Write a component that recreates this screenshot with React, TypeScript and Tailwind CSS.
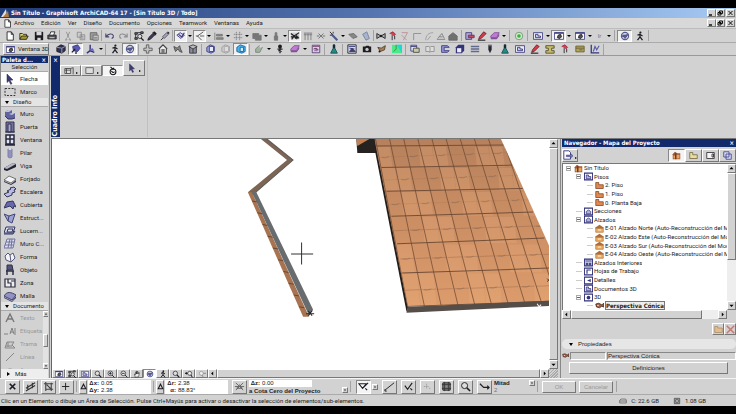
import React from "react";
import type { ReactNode } from "react";

const K = "#1c1c22";
const G = "#8c8c8c";
const N = "#34347c";
const L = "#9092c4";

const shapes: Record<string, ReactNode> = {
  page: <path d="M2.5 1h5l2.500 3v7h-7.500zM7.500 1v3H10" fill="#fff" stroke={K} />,
  open: <><path d="M1 10V3h3l1 1h4v2" fill="#e9dc7c" stroke={K} /><path d="M1 10l2-4h8l-2 4z" fill="#a89c2c" stroke={K} /></>,
  save: <><path d="M1 1h10v10H1z" fill={K} /><path d="M3 1h6v4H3zM4 8h4v3H4z" fill="#d8d8d8" /></>,
  print: <><path d="M3 5l1.500-4h5L8 5" fill="#fff" stroke={K} /><path d="M1 5h10v4.500H1z" fill="#555" stroke={K} /><path d="M3 8h6" stroke="#ddd" /></>,
  cut: <path d="M4 1l3 7M8 1L5 8M3 11a1 1 0 1 0 1-2zM9 11a1 1 0 1 1-1-2z" fill="none" stroke={G} />,
  copy: <path d="M1.500 1.500h5v6h-5zM5 4.500h5.500v6H5zM6 6.500h3M6 8.500h3" fill="#ccc" stroke={G} />,
  paste: <><path d="M1.500 2h8v8.500h-8z" fill="#9a9a9a" stroke="#666" /><path d="M5 5h6v6H5zM6 7.500h4M6 9.500h4" fill="#ddd" stroke="#666" /></>,
  undo: <path d="M1 3v4h4M1.500 6.500C4 3 9 2.500 10 5.500c.5 2-1 3-2 3.500" fill="none" stroke="#44446c" strokeWidth="1.300" />,
  redo: <path d="M11 3v4H7M10.500 6.500C8 3 3 2.500 2 5.500c-.5 2 1 3 2 3.500" fill="none" stroke={G} strokeWidth="1.300" />,
  find: <><path d="M1 2h3v2H1zM1 8h3v2H1zM8 1h3v2H8zM4 2h4M2 4v4" fill="#777" stroke={K} /><circle cx="7" cy="6.500" r="2.500" fill="#ddd" stroke={K} /><path d="M8.500 8.500l3 3" stroke={K} strokeWidth="1.500" /></>,
  dropper: <><path d="M1 11l1-3 5-5 2 2-5 5z" fill="#3c3c5c" stroke={K} /><path d="M7 2l2-1 2 2-1 2z" fill={K} stroke={K} /></>,
  syringe: <><path d="M1 11l3-3" stroke={K} /><path d="M3 7l5-5 2 2-5 5z" fill="#a8a8bc" stroke="#44445c" /><path d="M9 1l2 2" stroke={K} strokeWidth="1.500" /></>,
  check: <><path d="M1 5l4-3 5 3-4 4z" fill="#d9d9ee" stroke={N} /><path d="M3 4l4 3 3-5" fill="none" stroke={N} strokeWidth="1.300" /></>,
  angle: <path d="M10 1L3 6l5 5M1 6h3M6 6h5" fill="none" stroke="#444" />,
  align: <path d="M1 2v9M3 4h7v2H3zM3 8h8v2H3z" fill="#888" stroke="#777" />,
  grid: <path d="M4 1v10M8 1v10M1 4h10M1 8h10" stroke="#777" strokeDasharray="1.500 .7" />,
  solid: <path d="M1 3h7v6H1zM4 5h7v6H4z" fill="#777" stroke="#777" />,
  weight: <path d="M4 6h4v5H4zM5 2h2v4H5z" fill="#777" stroke="#777" />,
  gravity: <><path d="M1 2h10v8H1z" fill="#ccc" /><path d="M1 3l4 3 6-4M2 10l3-4 2 3 4-1M8 5v5M1 7h9" fill="none" stroke={K} strokeWidth="1.300" /></>,
  table: <path d="M1 2.500h10M2.500 3v8M6 3v8M9.500 3v8M1 4.500h10" stroke="#777" />,
  xmark: <path d="M3 3l6 6M9 3L3 9M1 6h3M8 6h3" stroke="#777" strokeWidth="1.200" />,
  fixed: <path d="M3 3l6 6M9 3L3 9" stroke={K} strokeWidth="1.800" />,
  wand: <><path d="M3 4l7 7" stroke="#4a5a8c" strokeWidth="2.500" /><path d="M1 1l3 3M5 1v2M1 5h2" stroke={K} /></>,
  roof: <path d="M1 4l6-1 4 4-5 2z" fill="#888" stroke="#666" />,
  leaf: <path d="M2 4l5-3 3 8-4 2z" fill="#a8b4cc" stroke="#7080a0" />,
  bowtie: <><path d="M1 3v6l5-3zM11 3v6L6 6z" fill="#aaa" stroke={K} /><circle cx="6" cy="6" r="1.500" fill={K} /></>,
  red: <><path d="M2 3l4-2 3 3-2 2" fill="#cc4450" stroke="#a02040" /><path d="M5 5v6M8 6v4" stroke={K} /></>,
  trim: <path d="M2 2h7M4 11l5-9M2 5l6 6" fill="none" stroke="#b88a90" />,
  corner: <path d="M2 11V3h9" fill="none" stroke="#888" />,
  arc: <path d="M2 11C2 5 6 2 11 2M4 11l4-5" fill="none" stroke="#999" />,
  node: <path d="M1 10h10M2 9l5-6 3 6M4 7h4" fill="none" stroke="#777" />,
  house: <path d="M1 6l5-4 5 4v5H1z" fill="#707070" stroke="#666" />,
  markup: <><path d="M1 2h7v8H1z" fill="#b8a8d4" stroke={N} /><path d="M4 5h7v3H4z" fill="#c64a5c" stroke="#603060" /></>,
  pencil: <><path d="M2 10l1-3 5-6 3 2-6 6z" fill="#d43c44" stroke="#702030" /><path d="M1 11h9" stroke={K} strokeWidth="1.300" /></>,
  eraser: <><path d="M1 6l4-4h6L8 8H1z" fill="#bf7bd0" stroke="#844c98" /><path d="M1 8h7l3-5v3L8 10H1z" fill="#80509c" /></>,
  green: <><circle cx="6" cy="6" r="4.500" fill="#d4e8cc" stroke="#64986c" /><circle cx="6" cy="6" r="2.200" fill="#38b040" /></>,
  plan: <><path d="M.5 2h11v8H.5z" fill="#eee" stroke={N} /><path d="M3 8V4h3v2h3v2z" fill="#c8c8e8" stroke={N} /></>,
  win: <><path d="M.5 2h11v8H.5z" fill="#fff" stroke={N} /><path d="M.5 2.500h11" stroke={N} strokeWidth="1.500" /><path d="M4 8l1-3 3-1 1 3-2 2z" fill="#555" stroke={K} /></>,
  orbit: <><circle cx="6" cy="6" r="4.300" fill="#ddd" stroke="#555a90" strokeWidth="1.400" /><path d="M3 5l6 0-3 4zM2 7l8-3" fill="#5c609c" stroke="#484c88" /></>,
  walk: <><circle cx="6.500" cy="1.800" r="1.300" fill={K} /><path d="M6 3v4l-3 4M6 7l3 4M3 5l3-1 3 2" fill="none" stroke={K} strokeWidth="1.500" /></>,
  cube: <><path d="M1 4l5-3 5 2v5l-4 3-6-2z" fill="#303050" stroke={K} /><path d="M1 4l6 1v6M7 5l4-2" fill="none" stroke="#a8a8d0" /></>,
  view: <><path d="M2 3l6-2 3 4-3 4-5-1z" fill="#5858b8" stroke={N} /><path d="M1 10l4-4M6 9v3" stroke={K} strokeWidth="1.500" /></>,
  axo: <><path d="M5 1v7l5 2M5 8l-4 3" fill="none" stroke={N} strokeWidth="1.700" /><path d="M5 6l3-1 2 3H5z" fill="#6464c0" /></>,
  plus: <path d="M4 1h3v4h4v3H7v3H4V8H1V5h3z" fill="#c4c4c4" stroke="#555" />,
  home: <><path d="M1 6l5-5 5 5M2 6v5h8V6" fill="#eee" stroke="#444" strokeWidth="1.300" /><path d="M4 6h4v5H4z" fill="#777" /></>,
  fly: <path d="M1 3l4 2 3-3 1 4 2 4-3-1-2-3-3 3z" fill="#888" stroke="#444" />,
  box: <><path d="M2 3h8v8H2z" fill="#8c8ca0" stroke="#333" /><path d="M1 3l5-2 5 2-5 3zM6 6v5" fill="#bbb" stroke="#333" /></>,
  blue: <><path d="M1 4l4-3 5 2v6l-4 2-5-2z" fill="#9ea6d8" stroke={N} /><path d="M4 3h5v6H4z" fill="#e6eefc" stroke={N} /></>,
  pale: <><path d="M1 4l4-3 5 2v6l-4 2-5-2z" fill="#ccc" stroke="#999" /><path d="M4 3h5v6H4z" fill="#ddd" stroke="#aaa" /></>,
  cyan: <><path d="M1 4l4-3 6 2v6l-4 2-6-2z" fill="#40b8e8" stroke="#2458a0" /><path d="M5 4h4v5H5z" fill="#c8f0ff" stroke="#2458a0" /></>,
  sun: <><path d="M2 10V6l4-4 4 2-3 6z" fill="#a0b4a0" stroke="#748474" /><circle cx="8" cy="3" r="1.500" fill="#dcdcdc" /></>,
  drill: <><circle cx="6" cy="3" r="2.300" fill={K} /><path d="M3 6h6M6 4v7M4 8l4 1" stroke={K} strokeWidth="1.500" /></>,
  list: <><path d="M1.500 1.500h9v9h-9z" fill="#dcd0ec" stroke="#503870" /><path d="M2 3h8M3 6l3-1 3 2M4 8h4" stroke="#804878" /></>,
  flask: <><path d="M5 1h2v4l3 6H2l3-6z" fill="#208c84" stroke="#164c50" /><path d="M5 1h2v4H5z" fill={K} /></>,
  render: <><path d="M1 1h10v10H1z" fill="#d4d8f0" stroke={K} /><path d="M2 3h8M3 9l3-4 4 4zM3 5l6 1" fill="#444" stroke={N} /></>,
  camera: <><path d="M1 3h3l1-1h3l1 1h2v7H1z" fill={K} /><circle cx="6" cy="6.500" r="2" fill="#c8c8c8" /></>,
  bird: <><path d="M1 4l4 1 5-3-1 5-5 2z" fill="#a88058" stroke="#4c3828" /><circle cx="3" cy="9" r="1.200" fill={K} /></>,
  vivid: <><path d="M0 1h12v10H0z" fill="#4be88c" /><path d="M6 1h6v10z" fill="#18d8d8" /><path d="M2 9l3-3v-5" stroke="#388838" fill="none" /></>,
  sheet: <><path d="M1 1.500h7v7H1z" fill="#eee" stroke={N} /><path d="M4 5h7v5H4z" fill="#c8cca0" stroke="#444" /><path d="M1 3h7" stroke={N} /></>,
  book: <path d="M1 3h4l1 1 1-1h4v6H7l-1 1-1-1H1zM6 4v6" fill="#ddd" stroke={G} />,
  sect: <path d="M2 2h7l2 2H5v4h6l-2 2H2z" fill="#9898d8" stroke={N} />,
  cubo: <><path d="M1 4l3-3h7v7l-3 3H1z" fill={N} /><path d="M2.500 5h5v5h-5z" fill="#ededf8" /></>,
  bars: <path d="M1 2h10v2H1zM1 5h10v2H1zM1 8h10v2H1z" fill="#63698c" />,
  pen: <><path d="M4 1h4v6l-2 4-2-4z" fill="#282834" /><path d="M4 2h4" stroke="#888" /></>,
  gold: <path d="M1 2h10v3H8v3h3v3H1V8h3V5H1z" fill="#c8bc68" stroke="#4c4824" />,
  tan: <path d="M1 2.500h10v7H1zM1 5h10M5 7h4" fill="#b4a45c" stroke="#645c34" />,
  plot: <><path d="M1.500 1v9.500H11" fill="none" stroke={N} strokeWidth="1.500" /><path d="M4 9l2-6 2 4 3-5" fill="none" stroke="#555aa8" strokeWidth="1.300" /></>,
  arrow: <path d="M3 1l6 6-3 .2 2 3.500-1.400.6L5 7.800 3 9.500z" fill="#3c3c74" stroke="#26264c" strokeWidth=".5" />,
  marquee: <path d="M1 2.500h10v7H1z" fill="none" stroke="#333" strokeDasharray="2 1.300" />,
  wall: <><path d="M1 4l3-2h4v3h3v5l-3 1H4L1 8z" fill="#6163a0" /><path d="M1 4l3-2h4L5 4zM5 6l3-1h3L8 7z" fill="#c0c2de" /><path d="M1 8l3 3h4l3-1" fill="none" stroke="#34345c" /></>,
  door: <><path d="M2 1h8v10H2z" fill="#70729c" stroke="#333350" /><path d="M4 3h3v8H4zM1 11h10" fill="#a8abd0" stroke="#333350" /></>,
  window: <path d="M2 1h8v9H2zM6 1v9M2 5h8M1 11h10" fill="#e0e4f4" stroke="#28283c" strokeWidth="1.500" />,
  column: <><path d="M4 2h4v8l-2 1-2-1z" fill={L} stroke="#8080a0" /><path d="M4 2l2-1 2 1-2 1z" fill="#eee" /></>,
  beam: <><path d="M0 8l9-5 3 1v3l-9 4-3-1z" fill="#222230" /><path d="M0 8l9-5 3 1-9 5z" fill="#b8b8c4" /></>,
  slab: <><path d="M0 7l5-4 7 3-5 4z" fill="#f3f3f6" stroke="#444" strokeWidth=".7" /><path d="M0 8l7 3 5-4v2l-5 3-7-3z" fill="#35354c" /></>,
  stair: <path d="M0 8l5-2-2-1 4-2-1-1 4-1 2 2-2 1 1 2-3 1 0 2-5 2z" fill="#b8baec" stroke="#35354c" />,
  roofp: <path d="M0 9l3-6 6-1 3 6-2-1-1 3-3-3z" fill="#6668ac" stroke="#33355c" />,
  shell: <path d="M0 2l5 2 6-2-3 9-4-2zM5 4l-1 5" fill="#9da1d4" stroke="#404478" />,
  sky: <path d="M2 2h9L9 8H0zM4 4h5L8 7H3zM0 9h9l2-3" fill="#dcdcf0" stroke="#303460" />,
  curtain: <path d="M3 1h8L9 10H0zM2 4h8M1 7h8M6 1L4 10M8 1L7 10" fill="#dcdcf0" stroke="#70749c" />,
  morph: <path d="M1 5l3-3 2 2 3-2 2 5-4 4-5-2zM6 4l1 7" fill="#f4f4f8" stroke="#555878" />,
  chair: <><path d="M3 1h5l1 5H3z" fill="#54547c" stroke="#303048" /><path d="M3 6v5M9 7v4M2 7h8" stroke="#303048" strokeWidth="1.500" /></>,
  zone: <path d="M1 2h10v8H1zM4 2v4h3v4M7 4h4" fill="#eee" stroke="#2c2c40" strokeWidth="1.200" />,
  mesh: <><path d="M0 6c3-5 7-4 12-1L8 10z" fill={L} stroke="#404068" /><path d="M0 7l8 4 4-5v2l-4 4-8-4z" fill="#40406c" /></>,
  text: <path d="M2 10L6 2l4 8M4 7h4" fill="none" stroke="#777" strokeWidth="1.400" />,
  label: <path d="M0 9h4M6 9l2-6 2 6M6 7h3M11 3v7" fill="none" stroke="#808080" />,
  fill: <path d="M1 10l2-6h7l-2 3 3 3zM2 8h6M4 4v5" fill="#ccc" stroke="#888" />,
  line: <path d="M2 10l8-8" stroke="#888" />,
  arco: <path d="M1 10a5 5 0 0 1 10 0" fill="none" stroke="#888" />,
  nhouse: <><path d="M0 5l4-4 3 2h4v8H1V5z" fill="#9c5838" /><path d="M2 6h2v4H2zM6 5h4v5H6z" fill="#eca45c" /><path d="M5 3v8" stroke="#402820" /></>,
  folder: <path d="M1 10V2h4v3h6v5z" fill="#eddb98" stroke="#68603c" />,
  layout: <path d="M1 2h10v8H1zM8 4h2v4H8z" fill="#f6f6f6" stroke={K} />,
  stack: <path d="M1 1h7v7H1zM4 4h7v7H4z" fill="#d4daf8" stroke={N} />,
  floor: <path d="M1 10V2h4v3h6v5z" fill="#e08850" stroke="#7c4020" />,
  elev: <><path d="M0 5l6-4 6 4v1H0z" fill="#b06c38" /><path d="M1 6h10v5H1z" fill="#eeb060" stroke="#b47840" /><path d="M4 8h4" stroke="#fff" /></>,
  folderN: <><path d="M.5 1.500h11v9H.5z" fill="#fff" stroke={N} strokeWidth="1.500" /><path d="M3 9V6l3-2 3 2v3z" fill="#b4b4d8" stroke={N} /></>,
  storeys: <><path d="M.5 1.500h11v9H.5z" fill="#fff" stroke={N} strokeWidth="1.500" /><path d="M3 9V4h3v2h3v3z" fill="#b4b4d8" stroke={N} /></>,
  interior: <><path d="M.5 1.500h11v9H.5z" fill="#c8c8e0" stroke={N} strokeWidth="1.500" /><path d="M2 4h8M3 7h2v2H3zM7 7h2v2H7z" stroke={N} fill={N} /></>,
  sheetN: <><path d="M.5 1.500h11v9H.5z" fill="#fff" stroke={N} strokeWidth="1.500" /><path d="M4 9V4h5" fill="none" stroke={N} strokeWidth="1.500" /></>,
  detail: <><path d="M.5 1.500h11v9H.5z" fill="#fff" stroke={N} strokeWidth="1.500" /><path d="M9 4L4 6l5 2z" fill={N} /></>,
  ball: <><path d="M.5 1.500h11v9H.5z" fill="#fff" stroke={N} strokeWidth="1.500" /><circle cx="6" cy="6" r="2.500" fill={N} /></>,
  cam: <><path d="M1 4l4-1 4 2 3-2v5l-3-1-3 2-4-1z" fill="#a06048" stroke="#3c2018" /><circle cx="4" cy="6" r="1" fill="#eee" /></>,
  exporter: <><path d="M1 1h6l2 2v8H1z" fill="#fff" stroke={N} /><path d="M4 6h5V4l3 3-3 3V8H4z" fill="#7078b8" stroke={N} strokeWidth=".6" /></>,
  zoom: <><circle cx="5" cy="5" r="3.300" fill="#ddd" stroke={K} /><path d="M7.500 7.500L11 11" stroke={K} strokeWidth="1.600" /></>,
  zoomin: <><circle cx="5" cy="5" r="3.500" fill="#eee" stroke={K} /><path d="M7.500 7.500L11 11M3 5h4M5 3v4" stroke={K} strokeWidth="1.300" /></>,
  zoomout: <><circle cx="5" cy="5" r="3.500" fill="#eee" stroke={K} /><path d="M7.500 7.500L11 11M3 5h4" stroke={K} strokeWidth="1.300" /></>,
  zoomprev: <><circle cx="7" cy="5" r="3" fill="#eee" stroke={K} /><path d="M9 7.500L11 11M0 5h4" stroke={K} strokeWidth="1.500" /><path d="M0 5l3-2v4z" fill={K} /></>,
  zoomnext: <><circle cx="5" cy="5" r="3" fill="#eee" stroke={G} /><path d="M6 7.500L8 11M8 5h4" stroke={G} strokeWidth="1.500" /></>,
  hand: <path d="M2 6l2 1V3h1v3-4h1v4-3.500h1.500V6l1-2h1l-1 6-5 1z" fill="#eee" stroke={K} strokeWidth=".8" />,
  wire: <path d="M1 8l10-6M1 11l10-6M3 4v6M8 2v6" stroke="#333" strokeWidth="1.200" />,
  snap: <path d="M1 3h10M3 1v10M3 9h8M9 2v9M4 4l5 5" fill="none" stroke="#444" strokeWidth="1.200" />,
  cross: <path d="M5 2v8M1 6h8" stroke={K} />,
  delta: <path d="M2 10L6 2l4 8z" fill="none" stroke={K} strokeWidth="1.800" />,
  guide: <path d="M2 2l8 8M10 2l-8 8M1 6h10M6 4l3 4H3z" fill="none" stroke="#666" />,
  poly: <path d="M1 3h8L5 8zM5 8l6-6M8 8l2 2" fill="none" stroke={K} strokeWidth="1.200" />,
  curve: <path d="M1 3l4 4 6 0M9 5l2 2-2 2" fill="none" stroke={K} strokeWidth="1.200" />,
  diag: <path d="M1 10l10-8M1 9v2h2" fill="none" stroke={K} />,
  tick: <path d="M2 5l3 4 5-7M8 8l2 2" fill="none" stroke={K} strokeWidth="1.200" />,
  dots: <path d="M2 6h5M5 3v6M8 8h2" fill="none" stroke={G} strokeDasharray="1 1" />,
  group: <><path d="M2 2h8v8H2z" fill="#888" stroke={K} /><path d="M1 4h10M1 8h10M4 1v10M8 1v10" stroke="#333" /></>,
  disk: <path d="M1 5l2-2h7l1 2v4H1zM1 6h10" fill="#ccc" stroke="#555" />,
  chip: <path d="M2 2h8v8H2zM4 4h4v4H4z" fill="#ccc" stroke="#444" strokeWidth="1.200" />,
  door2: <><path d="M1 3h7v6H1z" fill="#ddd" stroke="#444" /><path d="M8 3l3-1v8M1 5h7M3 3v6" stroke="#444" fill="none" /></>,
  rect: <path d="M1 2h9v7H1z" fill="#ddd" stroke="#555" />,
  spin: <><circle cx="6" cy="7" r="3.500" fill="#fff" stroke={K} strokeWidth="1.300" /><path d="M4 6l2 2 2-1M3 1l3 3 1-2" fill="none" stroke={K} strokeWidth="1.300" /></>,
};

function Icon({ name, className = "size-[10px]" }: { name: string; className?: string }) {
  return (
    <svg viewBox="0 0 12 12" className={`${className} shrink-0`} aria-hidden="true">
      {shapes[name]}
    </svg>
  );
}

const raised = "border border-t-white border-l-white border-r-[#777] border-b-[#777] bg-[#d2d2d2]";
const sunken = "border border-t-[#888] border-l-[#888] border-r-white border-b-white";
const bold = "font-['DejaVu_Sans_Condensed','DejaVu_Sans',sans-serif] font-bold";

function Sep({ wide }: { wide?: boolean }) {
  return (
    <span className={`flex shrink-0 justify-center ${wide ? "w-[5px]" : "w-[3px]"}`}>
      <span className="h-[11px] w-px bg-[#a2a2a2]" />
    </span>
  );
}

function Drop() {
  return (
    <button aria-label="Más opciones" className="flex h-[12px] w-[6px] shrink-0 items-center justify-center">
      <span className="border-x-2 border-t-2 border-x-transparent border-t-black" />
    </button>
  );
}

const cell = { s: "w-[12px]", m: "w-[13px]", l: "w-[15px]", x: "w-[16px]" };

/* "|" separator, "!" wide separator, "v" drop arrow, "*" pressed, "size:name" button */
function Tools({ items }: { items: string }) {
  return (
    <>
      {items.split(" ").map((item, i) => {
        if (item === "|") return <Sep key={i} />;
        if (item === "!") return <Sep key={i} wide />;
        if (item === "v") return <Drop key={i} />;
        const [size, raw] = item.split(":");
        const on = raw.startsWith("*");
        const name = on ? raw.slice(1) : raw;
        return (
          <button
            key={i}
            aria-label={name}
            aria-pressed={on}
            className={`flex h-[12px] shrink-0 items-center justify-center ${cell[size as keyof typeof cell]} ${on ? `bg-[#f0f0f0] ${sunken}` : ""}`}
          >
            <Icon name={name} />
          </button>
        );
      })}
    </>
  );
}

function WindowButtons() {
  return (
    <div className="flex">
      {["Minimizar", "Restaurar", "Cerrar"].map((label, i) => (
        <button key={label} aria-label={label} className={`flex h-[8px] w-[9px] items-center justify-center ${i === 2 ? "ml-px" : ""} ${raised}`}>
          <svg viewBox="0 0 7 6" className="h-[6px] w-[7px]" fill="none" stroke="#111">
            {i === 0 && <path d="M1 5h3" strokeWidth="1.500" />}
            {i === 1 && <path d="M2.500 1h3v2.500h-3zM1 2.500h3v2.500H1z" />}
            {i === 2 && <path d="M1.500 1l4 4M5.500 1l-4 4" />}
          </svg>
        </button>
      ))}
    </div>
  );
}

const menus = ["Archivo", "Edición", "Ver", "Diseño", "Documento", "Opciones", "Teamwork", "Ventanas", "Ayuda"];

function Header() {
  return (
    <header>
      <div className="flex h-[10px] items-center justify-between bg-linear-to-r from-[#203c78] via-[#5474b0] to-[#a8ccf4] px-px">
        <h1 className={`flex items-center gap-[2px] text-white ${bold}`}>
          <svg viewBox="0 0 8 8" className="size-[8px]"><path d="M0 8L5 0l1 8z" fill="#e4e0d8" /><path d="M2 8L7 2l1 6z" fill="#b07a40" /></svg>
          Sin Título - Graphisoft ArchiCAD-64 17 - [Sin Título 3D / Todo]
        </h1>
        <WindowButtons />
      </div>
      <div className="flex h-[11px] items-center justify-between border-b border-[#bdbdbd] bg-[#d8d8d8] px-px">
        <nav className="flex items-center gap-[7px] pl-[2px]">
          <Icon name="page" className="-mr-[5px] size-[9px]" />
          {menus.map((m) => <button key={m}>{m}</button>)}
        </nav>
        <WindowButtons />
      </div>
      <div className="flex h-[14px] items-center border-b border-[#aaa] pl-[3px]" role="toolbar" aria-label="Estándar">
        <Tools items="m:page x:open m:save m:print | m:cut m:copy m:paste | m:undo m:redo | m:find m:dropper m:syringe | m:*check v m:*angle v m:align v m:grid v m:solid v m:weight v m:*gravity m:table m:xmark m:wand v m:roof m:leaf | s:bowtie s:red s:trim s:corner s:arc s:node s:house ! s:markup s:pencil m:eraser v ! m:green ! l:plan v l:*win v l:win v" />
        <button className="w-[13px] text-center text-[#777]">Ir</button>
        <Tools items="v ! l:*orbit l:walk |" />
      </div>
      <div className="flex h-[13px] items-center border-b border-[#999] pl-[3px]" role="toolbar" aria-label="Ventana 3D">
        <button className={`mr-[4px] flex h-[12px] w-[46px] items-center gap-[3px] pl-[2px] whitespace-nowrap ${raised}`}>
          <Icon name="win" className="size-[9px]" />
          Ventana 3D
        </button>
        <Tools items="l:cube l:*view l:axo v | l:walk l:*orbit | l:plus l:home l:fly l:box | l:blue l:pale l:*cyan | l:sun v l:drill l:eraser v l:list | l:flask | l:render l:camera l:bird l:vivid | l:sheet l:book l:sect l:cubo l:bars l:pen l:flask l:plan l:pencil l:gold l:red l:tan l:plot |" />
      </div>
    </header>
  );
}

const designTools = [
  ["wall", "Muro"], ["door", "Puerta"], ["window", "Ventana"], ["column", "Pilar"], ["beam", "Viga"],
  ["slab", "Forjado"], ["stair", "Escalera"], ["roofp", "Cubierta"], ["shell", "Estruct..."], ["sky", "Lucern..."],
  ["curtain", "Muro C..."], ["morph", "Forma"], ["chair", "Objeto"], ["zone", "Zona"], ["mesh", "Malla"],
];
const docTools = [["text", "Texto"], ["label", "Etiqueta"], ["fill", "Trama"], ["line", "Línea"], ["arco", "Arco"]];

function ToolRow({ icon, label, on, muted }: { icon: string; label: string; on?: boolean; muted?: boolean }) {
  return (
    <button
      disabled={muted}
      aria-pressed={on}
      className={`flex h-[13px] w-full shrink-0 items-center gap-[4px] pl-[3px] text-left ${on ? "bg-white" : ""} ${muted ? "text-[#999]" : ""}`}
    >
      <Icon name={icon} className="size-[12px]" />
      {label}
    </button>
  );
}

function Section({ title }: { title: string }) {
  return (
    <h2 className="flex h-[9px] shrink-0 items-center gap-[4px] border-b border-[#aaa] bg-[#e4e4e4] pl-[4px]">
      <span className="border-x-[2px] border-t-[3px] border-x-transparent border-t-black" />
      {title}
    </h2>
  );
}

function Palette() {
  return (
    <aside className="flex w-[50px] shrink-0 flex-col border-r border-l border-r-[#8a8a8a] border-l-[#888] pr-px">
      <div className={`flex h-[7px] shrink-0 items-center justify-between bg-[#12296c] pr-[2px] pl-px text-white ${bold}`}>
        Paleta d... <button aria-label="Cerrar paleta">×</button>
      </div>
      <h2 className="flex h-[9px] shrink-0 items-center justify-center border-b border-[#aaa]">Selección</h2>
      <ToolRow icon="arrow" label="Flecha" on />
      <ToolRow icon="marquee" label="Marco" />
      <Section title="Diseño" />
      {designTools.map(([icon, label]) => <ToolRow key={label} icon={icon} label={label} />)}
      <Section title="Documento" />
      <div className="flex min-h-0 flex-1 justify-between overflow-hidden">
        <div className="flex flex-col">
          {docTools.map(([icon, label]) => <ToolRow key={label} icon={icon} label={label} muted />)}
        </div>
        <div className="flex w-[5px] flex-col justify-between bg-[#e2e2e2]">
          <ScrollButton dir="up" small />
          <span className={`h-[13px] ${raised}`} />
          <ScrollButton dir="down" small />
        </div>
      </div>
      <button className="flex h-[9px] shrink-0 items-center gap-[5px] bg-[#eee] pl-[6px]">
        <span className="border-y-[2px] border-l-[3px] border-y-transparent border-l-black" />
        Más
      </button>
    </aside>
  );
}

const dirs = { up: "M2 6h6L5 3z", down: "M2 4h6L5 7z", left: "M6 2v6L3 5z", right: "M4 2v6l3-3z" };

function ScrollButton({ dir, small }: { dir: keyof typeof dirs; small?: boolean }) {
  return (
    <button aria-label={`Desplazar ${dir}`} className={`flex shrink-0 items-center justify-center ${small ? "size-[6px]" : "size-[9px]"} ${raised}`}>
      <svg viewBox="0 0 10 10" className={small ? "size-[4px]" : "size-[7px]"}><path d={dirs[dir]} fill="#000" /></svg>
    </button>
  );
}

function InfoBox() {
  return (
    <section className="flex h-[83px] shrink-0 border-b border-[#777] pb-px">
      <div className={`flex w-[9px] flex-col items-center justify-between bg-[#12296c] pb-px text-white ${bold}`}>
        <button aria-label="Cerrar cuadro" className="leading-[7px]">×</button>
        <h2 className="rotate-180 text-[7px] leading-[9px] [writing-mode:vertical-rl]">Cuadro Info</h2>
      </div>
      <div className="flex h-[20px] w-[87px] items-end">
        {["door2", "rect", "spin"].map((b, i) => (
          <button key={b} aria-label={b} className={`flex h-[11px] w-[21px] items-center justify-center gap-[2px] ${i === 2 ? `bg-[#f4f4f4] ${sunken}` : raised}`}>
            <Icon name={b} />
            {i < 2 && <span className="mt-[4px] border-y-[1px] border-l-2 border-y-transparent border-l-black" />}
          </button>
        ))}
        <button aria-label="Flecha" className={`flex h-[16px] w-[22px] items-center justify-center gap-[2px] ${raised}`}>
          <Icon name="arrow" />
          <span className="mt-[6px] border-y-[1px] border-l-2 border-y-transparent border-l-black" />
        </button>
      </div>
      <div className="border-l border-[#c0c0c0]" />
    </section>
  );
}

const rowLines = [
  [75, 33, 455, 30], [90, 97, 480, 90], [105, 168, 512, 160], [120, 243, 543, 230],
  [137, 325, 577, 308], [152, 412, 612, 397], [168, 512, 640, 495],
];

function Scene() {
  const steps = Array.from({ length: 11 }, (_, i) => i);
  return (
    <svg viewBox="52 140 498 229" preserveAspectRatio="xMinYMin slice" className="h-full w-full" role="img" aria-label="Vista 3D de cubiertas de teja">
      <defs>
        <linearGradient id="tile" x1="0" y1="0" x2="0" y2="1">
          <stop offset="0" stopColor="#b5805c" />
          <stop offset=".4" stopColor="#c88c62" />
          <stop offset="1" stopColor="#dd9c6c" />
        </linearGradient>
        <clipPath id="roofClip"><path d="M373 140H499L550 253V302L406 307Z" /></clipPath>
      </defs>
      <path d="M260 140h6l26 21-37 32-3 4-5-4 39-32z" fill="#7d6555" />
      <path d="M266 140l26 21-37 32" fill="none" stroke="#5d5a58" />
      <path d="M247 193l4 0 57 124h-6z" fill="#a87350" />
      <path d="M251 193l4-1 57 118-4 6z" fill="#686c6e" />
      {steps.slice(1).map((i) => (
        <path key={i} d={`M${246 + i * 5.2} ${190 + i * 11.700}l5 1`} stroke="#5a3c2c" strokeWidth=".8" />
      ))}
      <path d="M355 140h20v14h-19z" fill="#26221f" />
      <path d="M355 140h13l-12 7z" fill="#c58052" />
      <path d="M373 140l3 8 31 159-2 5-31-158z" fill="#221e1c" />
      <g clipPath="url(#roofClip)">
        <path d="M370 138H560V310H400Z" fill="url(#tile)" />
        <g transform="translate(350 136) scale(.3333)" fill="none">
          {rowLines.slice(0, 6).map(([x1, y1], r) => {
            const n = rowLines[r + 1];
            return steps.slice(0, 10).map((i) => {
              const ax = x1 + i * (42 + r * 1.400);
              const mid = (y1 + n[1]) / 2 + 2 - i * 1.500;
              return (
                <g key={`${r}-${i}`}>
                  {(i * 3 + r) % 4 < 2 && <path d={`M${ax} ${y1 + 2}h${40 + r}l8 ${n[1] - y1 - 4}h-${42 + r}z`} fill="#f4b888" opacity=".2" />}
                  <path d={`M${ax + 8} ${mid}l${40 + r} -2`} stroke="#8f5d3f" strokeWidth="2" opacity={r > 2 ? ".55" : ".2"} />
                  {(i + r) % 2 === 0 && <path d={`M${ax + 16} ${mid}l12 1 10 -4`} stroke="#5f5b54" strokeWidth="2" opacity=".5" />}
                </g>
              );
            });
          })}
          {rowLines.map(([x1, y1, x2, y2]) => <path key={y1} d={`M${x1} ${y1}L${x2} ${y2}`} stroke="#74503a" strokeWidth="3" />)}
          {steps.map((i) => <path key={i} d={`M${70 + 42 * i} 0L${168 + 50.500 * i} 512`} stroke="#6b4834" strokeWidth="2.200" />)}
        </g>
      </g>
      <path d="M406 307l144-6v5l-145 7z" fill="#554d48" />
      <path d="M300.500 243v22M290 254.500h22" stroke="#333" />
      <path d="M307 311l4 5M311 311l-4 5M305 314h8" stroke="#222" />
      <path d="M535 304l2 3 2-2" stroke="#fff" fill="none" />
      <path d="M545 279l3 3M548 279l-3 3" stroke="#222" strokeWidth=".8" />
    </svg>
  );
}

function Viewport() {
  const nav = ["win", "find", "plan", "zoom", "zoomin", "zoomout", "hand", "orbit", "walk", "zoom", "zoomprev", "zoomnext"];
  return (
    <main className="flex min-h-0 min-w-0 flex-1 flex-col border-l border-[#666]">
      <div className="flex min-h-0 flex-1">
        <div className="min-w-0 flex-1 overflow-hidden bg-white"><Scene /></div>
        <div className="flex w-[9px] flex-col bg-[#e4e4e4]">
          <ScrollButton dir="up" />
          <span className={`w-full flex-1 ${raised}`} />
          <ScrollButton dir="down" />
        </div>
      </div>
      <div className="flex h-[9px] shrink-0 items-center bg-[#e2e2e2]">
        {nav.map((n, i) => (
          <button key={i} aria-label={n} className={`flex h-[9px] w-[13px] shrink-0 items-center justify-center ${i === 7 ? `bg-white ${sunken}` : raised}`}>
            <Icon name={n} className="size-[8px]" />
          </button>
        ))}
        <ScrollButton dir="left" />
        <span className={`h-full flex-1 ${raised}`} />
        <ScrollButton dir="right" />
        <span className="h-full w-[9px] bg-[repeating-linear-gradient(135deg,#d2d2d2_0_1px,#aaa_1px_2px)]" />
      </div>
    </main>
  );
}

type Node = { depth: string; icon: string; label: string; open?: boolean; current?: boolean };
const d0 = "pl-[3px]";
const d1 = "pl-[13px]";
const d2 = "pl-[24px]";
const tree: Node[] = [
  { depth: d0, icon: "nhouse", label: "Sin Título", open: true },
  { depth: d1, icon: "storeys", label: "Pisos", open: true },
  { depth: d2, icon: "floor", label: "2. Piso" },
  { depth: d2, icon: "floor", label: "1. Piso" },
  { depth: d2, icon: "floor", label: "0. Planta Baja" },
  { depth: d1, icon: "folderN", label: "Secciones" },
  { depth: d1, icon: "folderN", label: "Alzados", open: true },
  { depth: d2, icon: "elev", label: "E-01 Alzado Norte (Auto-Reconstrucción del Modelo)" },
  { depth: d2, icon: "elev", label: "E-02 Alzado Este (Auto-Reconstrucción del Modelo)" },
  { depth: d2, icon: "elev", label: "E-03 Alzado Sur (Auto-Reconstrucción del Modelo)" },
  { depth: d2, icon: "elev", label: "E-04 Alzado Oeste (Auto-Reconstrucción del Modelo)" },
  { depth: d1, icon: "interior", label: "Alzados Interiores" },
  { depth: d1, icon: "sheetN", label: "Hojas de Trabajo" },
  { depth: d1, icon: "detail", label: "Detalles" },
  { depth: d1, icon: "storeys", label: "Documentos 3D" },
  { depth: d1, icon: "ball", label: "3D", open: true },
  { depth: d2, icon: "cam", label: "Perspectiva Cónica", current: true },
];

function Navigator() {
  return (
    <aside className="flex w-[176px] shrink-0 flex-col border-l border-[#888] pl-px">
      <div className={`flex h-[8px] shrink-0 items-center justify-between bg-[#12296c] px-[2px] text-white ${bold}`}>
        <h2>Navegador - Mapa del Proyecto</h2>
        <button aria-label="Cerrar navegador">×</button>
      </div>
      <div className="flex h-[16px] shrink-0 items-center justify-between">
        <button aria-label="Proyecto" className={`flex h-[13px] w-[16px] items-center gap-[2px] ${raised}`}>
          <Icon name="exporter" />
          <span className="mt-[6px] border-y-[1px] border-l-2 border-y-transparent border-l-black" />
        </button>
        <div className="flex">
          {["nhouse", "folder", "layout", "stack"].map((n, i) => (
            <button key={n} aria-label={n} className={`flex h-[13px] w-[17px] items-center justify-center ${i === 0 ? `bg-[#f4f4f4] ${sunken}` : raised}`}>
              <Icon name={n} className="size-[9px]" />
            </button>
          ))}
        </div>
      </div>
      <div className="flex h-[147px] shrink-0 border-t border-l border-[#777] bg-white">
        <ul className="flex min-w-0 flex-1 flex-col">
          {tree.map((n) => (
            <li key={n.label} className={`flex min-h-0 flex-1 items-center ${n.depth}`}>
              {n.open ? (
                <span className="mr-[3px] flex size-[5px] shrink-0 items-center justify-center border border-[#aaa]"><span className="h-px w-[3px] bg-[#666]" /></span>
              ) : (
                <span className="mr-[2px] h-px w-[6px] shrink-0 bg-[#ccc]" />
              )}
              <Icon name={n.icon} className="size-[9px]" />
              <span className={`ml-px overflow-hidden whitespace-nowrap ${n.current ? `border border-[#777] bg-[#eee] leading-[7px] underline ${bold}` : ""}`}>{n.label}</span>
            </li>
          ))}
        </ul>
        <div className="flex w-[9px] flex-col bg-[#eee]">
          <ScrollButton dir="up" />
          <span className={`h-[87px] ${raised}`} />
          <span className="flex-1" />
          <ScrollButton dir="down" />
        </div>
      </div>
      <div className="mr-[9px] flex h-[9px] shrink-0 bg-[#eee]">
        <ScrollButton dir="left" />
        <span className={`w-[131px] ${raised}`} />
        <span className="flex-1" />
        <ScrollButton dir="right" />
      </div>
      <div className="flex h-[20px] shrink-0 items-center justify-end">
        <button aria-label="Guardar vista" className={`flex size-[12px] items-center justify-center ${raised}`}>
          <svg viewBox="0 0 12 12" className="size-[9px]"><path d="M1 10V2h4v2h6v6z" fill="#e4bc90" stroke="#a88860" /></svg>
        </button>
        <button aria-label="Borrar" className={`flex size-[12px] items-center justify-center ${raised}`}>
          <svg viewBox="0 0 12 12" className="size-[9px]"><path d="M1 1l10 10M11 1L1 11" stroke="#c87870" strokeWidth="2" /></svg>
        </button>
      </div>
      <h3 className="flex h-[10px] shrink-0 items-center gap-[5px] rounded-[5px] bg-[#e6e6e6] pl-[7px] font-['Liberation_Sans',sans-serif]">
        <span className="border-x-[2px] border-t-[3px] border-x-transparent border-t-black" />
        Propiedades
      </h3>
      <div className="flex h-[13px] shrink-0 items-center gap-px">
        <Icon name="cam" className="size-[7px]" />
        <span className={`h-[8px] w-[36px] ${sunken}`} />
        <input aria-label="Nombre" defaultValue="Perspectiva Cónica" className={`h-[8px] min-w-0 flex-1 font-['Liberation_Sans',sans-serif] ${sunken}`} />
      </div>
      <button className={`mr-[8px] ml-[7px] h-[12px] shrink-0 font-['Liberation_Sans',sans-serif] ${raised}`}>Definiciones</button>
    </aside>
  );
}

function SquareButton({ icon, on }: { icon: string; on?: boolean }) {
  return (
    <button aria-label={icon} className={`flex h-[14px] w-[15px] shrink-0 items-center justify-center ${on ? `bg-[#f4f4f4] ${sunken}` : raised}`}>
      <Icon name={icon} className="size-[11px]" />
    </button>
  );
}

function Field({ label, value }: { label: string; value: string }) {
  return (
    <label className="flex h-[7px] items-center bg-white">
      <span className="w-[13px] pr-[2px] text-right font-bold whitespace-nowrap">{label}</span>
      <input defaultValue={value} className="h-[7px] w-[50px] leading-[7px]" />
    </label>
  );
}

function Coordinates() {
  return (
    <div className="flex h-[16px] items-center border-t border-[#f4f4f4] pl-[5px] font-['Liberation_Sans',sans-serif]">
      <div className="flex gap-[3px]">
        <SquareButton icon="fixed" /><SquareButton icon="wire" /><SquareButton icon="snap" /><SquareButton icon="cross" />
      </div>
      <Sep wide />
      <button aria-label="Delta XY" className={`flex h-[14px] w-[8px] items-center ${raised}`}><Icon name="delta" className="size-[7px]" /></button>
      <div className="ml-px"><Field label="Δx:" value="0.05" /><Field label="Δy:" value="2.38" /></div>
      <Sep wide />
      <button aria-label="Delta ángulo" className={`flex h-[14px] w-[8px] items-center ${raised}`}><Icon name="delta" className="size-[7px]" /></button>
      <div className="mr-[4px] ml-px"><Field label="Δr:" value="2.38" /><Field label="α:" value="88.83°" /></div>
      <SquareButton icon="guide" />
      <div className="ml-[2px] w-[93px]">
        <div className="w-[63px]"><Field label="Δz:" value="0.00" /></div>
        <p className="h-[7px] font-bold whitespace-nowrap">a Cota Cero del Proyecto</p>
      </div>
      <span className="mt-[7px]"><ScrollButton dir="right" small /></span>
      <Sep wide />
      <div className="ml-[3px] flex items-center gap-[4px]">
        <span className="flex"><SquareButton icon="poly" on /><span className="flex items-center pl-px"><ScrollButton dir="right" small /></span></span>
        <SquareButton icon="diag" /><SquareButton icon="tick" /><SquareButton icon="dots" />
        <SquareButton icon="group" /><SquareButton icon="zoom" /><SquareButton icon="curve" />
      </div>
      <div className="ml-[2px] w-[35px] leading-[7px]">
        <p className="font-bold">Mitad</p>
        <p className="text-[#777]">2</p>
      </div>
      <span className="mb-[7px]"><ScrollButton dir="right" small /></span>
      <Sep wide />
      <button disabled className={`ml-[2px] h-[12px] w-[34px] text-[#999] ${raised}`}>OK</button>
      <button disabled className={`mr-[2px] ml-[3px] h-[12px] w-[34px] text-[#999] ${raised}`}>Cancelar</button>
      <Sep />
    </div>
  );
}

export default function App() {
  return (
    <div className="flex h-screen flex-col bg-black py-[8px] font-[Roboto,'DejaVu_Sans_Condensed',sans-serif] text-[6px] leading-[8px] text-[#222]">
      <div className="flex min-h-0 flex-1 flex-col overflow-hidden bg-[#d2d2d2]">
        <Header />
        <div className="flex min-h-0 flex-1">
          <Palette />
          <div className="flex min-w-0 flex-1 flex-col pl-px">
            <InfoBox />
            <div className="flex min-h-0 flex-1 gap-[2px]">
              <Viewport />
              <Navigator />
            </div>
          </div>
        </div>
        <Coordinates />
        <footer className="flex h-[12px] items-center gap-[14px] border-t border-[#aaa] pr-[30px] pl-px">
          <p className="flex-1 whitespace-nowrap">Clic en un Elemento o dibuje un Área de Selección. Pulse Ctrl+Mayús para activar o desactivar la selección de elementos/sub-elementos.</p>
          <span className="flex items-center gap-[4px]"><Icon name="disk" className="size-[8px]" />C: 22.6 GB</span>
          <span className="flex items-center gap-[4px]"><Icon name="chip" className="size-[8px]" />1.08 GB</span>
        </footer>
      </div>
    </div>
  );
}
